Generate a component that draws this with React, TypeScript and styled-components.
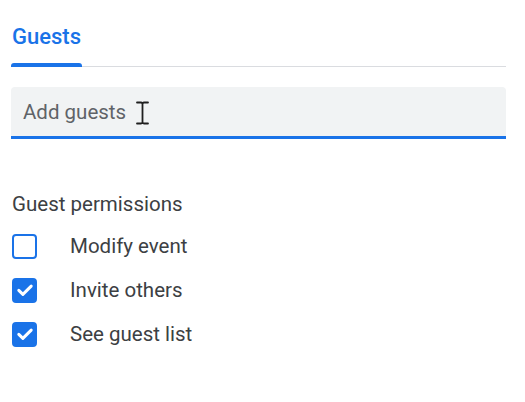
import React from "react";
import styled, { createGlobalStyle } from "styled-components";

const GlobalStyle = createGlobalStyle`
  html, body {
    margin: 0;
    padding: 0;
    background: #fff;
  }
  body {
    font-family: Roboto, "Liberation Sans", Arial, sans-serif;
    color: #3c4043;
  }
`;

const Panel = styled.div`
  width: 495px;
  padding: 23px 0 0 11px;
  display: flex;
  flex-direction: column;
`;

const TabBar = styled.div`
  display: flex;
  align-items: flex-end;
  border-bottom: 1px solid #dadce0;
`;

const Tab = styled.div`
  display: flex;
  flex-direction: column;
  margin-bottom: -1px;
  cursor: pointer;
`;

const TabLabel = styled.span<{ active?: boolean }>`
  padding: 0 1px 12px 1px;
  font-size: 22px;
  line-height: 28px;
  font-weight: 500;
  color: ${(p) => (p.active ? "#1a73e8" : "#5f6368")};
`;

const TabIndicator = styled.div`
  height: 4px;
  background: #1a73e8;
  border-radius: 3px 3px 0 0;
`;

const InputWrap = styled.div`
  position: relative;
  margin-top: 20px;
`;

const GuestInput = styled.input`
  display: block;
  box-sizing: border-box;
  width: 100%;
  height: 52px;
  padding: 0 12px;
  border: none;
  border-bottom: 3px solid #1a73e8;
  border-radius: 4px 4px 0 0;
  background: #f1f3f4;
  font-family: inherit;
  font-size: 20.5px;
  color: #3c4043;
  outline: none;

  &::placeholder {
    color: #5f6368;
    opacity: 1;
  }
`;

const TextCursor = styled.svg`
  position: absolute;
  left: 125px;
  top: 14px;
  pointer-events: none;
`;

const Permissions = styled.section`
  margin-top: 53px;
  display: flex;
  flex-direction: column;
`;

const SectionTitle = styled.div`
  padding-left: 1px;
  font-size: 20.5px;
  line-height: 24px;
  color: #3c4043;
  margin-bottom: 8px;
`;

const Row = styled.label`
  display: flex;
  align-items: center;
  height: 44px;
  padding-left: 1px;
  cursor: pointer;
`;

const Box = styled.span<{ checked?: boolean }>`
  box-sizing: border-box;
  width: 25px;
  height: 25px;
  flex-shrink: 0;
  border: 2.8px solid #1a73e8;
  border-radius: 4px;
  background: ${(p) => (p.checked ? "#1a73e8" : "#fff")};
  display: flex;
  align-items: center;
  justify-content: center;
`;

const RowLabel = styled.span`
  margin-left: 33px;
  font-size: 20.5px;
  line-height: 24px;
  color: #3c4043;
`;

const permissions = [
  { label: "Modify event", checked: false },
  { label: "Invite others", checked: true },
  { label: "See guest list", checked: true },
];

const Check = () => (
  <svg width="20" height="20" viewBox="0 0 20 20">
    <polyline
      points="3.8,10.4 7.9,14.4 16.2,6.1"
      fill="none"
      stroke="#fff"
      strokeWidth="3"
      strokeLinecap="round"
      strokeLinejoin="round"
    />
  </svg>
);

const App = () => {
  return (
    <>
      <GlobalStyle />
      <Panel>
        <TabBar>
          <Tab>
            <TabLabel active>Guests</TabLabel>
            <TabIndicator />
          </Tab>
        </TabBar>

        <InputWrap>
          <GuestInput placeholder="Add guests" />
          <TextCursor width="13" height="24" viewBox="0 0 13 24">
            <path
              d="M1 1.5 H5 Q6.5 1.5 6.5 3 V21 Q6.5 22.5 5 22.5 H1 M12 1.5 H8 Q6.5 1.5 6.5 3 M6.5 21 Q6.5 22.5 8 22.5 H12"
              fill="none"
              stroke="#1f1f1f"
              strokeWidth="1.8"
              strokeLinecap="round"
            />
          </TextCursor>
        </InputWrap>

        <Permissions>
          <SectionTitle>Guest permissions</SectionTitle>
          {permissions.map((p) => (
            <Row key={p.label}>
              <Box checked={p.checked}>{p.checked && <Check />}</Box>
              <RowLabel>{p.label}</RowLabel>
            </Row>
          ))}
        </Permissions>
      </Panel>
    </>
  );
};

export default App;
